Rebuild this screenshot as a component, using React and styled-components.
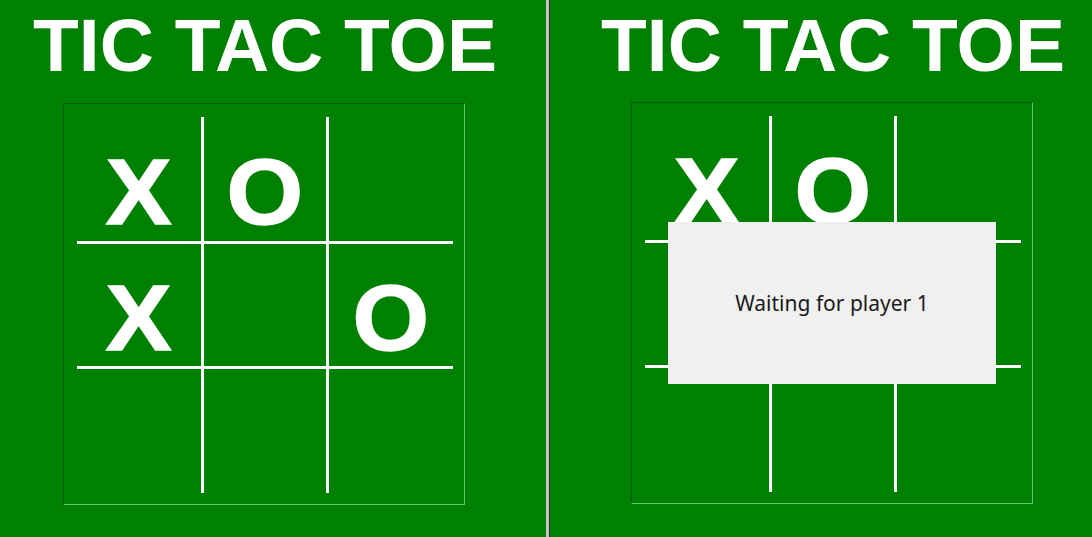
import styled, { createGlobalStyle } from "styled-components";

const GlobalStyle = createGlobalStyle`
  html, body {
    margin: 0;
    padding: 0;
    background: #008000;
  }
  * {
    box-sizing: border-box;
  }
`;

const Screen = styled.div`
  display: flex;
  width: 1092px;
  height: 537px;
  overflow: hidden;
  background-color: #008000;
`;

const Panel = styled.div`
  width: ${({ width }) => width}px;
  flex-shrink: 0;
  padding-left: ${({ offset }) => offset}px;
`;

const Divider = styled.div`
  width: 4px;
  flex-shrink: 0;
  background-color: #c6c6c6;
  border-right: 1px solid #1f2a1f;
`;

const Column = styled.div`
  width: 530px;
  display: flex;
  flex-direction: column;
  align-items: center;
`;

const Title = styled.h1`
  margin: 0;
  padding-top: 8px;
  font-family: "Liberation Sans", Arial, sans-serif;
  font-weight: 700;
  font-size: 75px;
  line-height: 75px;
  color: #ffffff;
  white-space: nowrap;
`;

const Board = styled.div`
  position: relative;
  margin-top: ${({ top }) => top}px;
  margin-right: ${({ shift }) => shift}px;
  width: 402px;
  height: 402px;
  padding: 13px;
  border: 1px solid;
  border-color: #005c00 #6fbf6f #6fbf6f #005c00;
`;

const Grid = styled.div`
  display: grid;
  grid-template-columns: 124px 128px 124px;
  grid-template-rows: 124px 128px 124px;
`;

const Cell = styled.div`
  display: flex;
  align-items: center;
  justify-content: center;
  padding-top: 25px;
  border-style: solid;
  border-color: #ffffff;
  border-width: ${({ row, col }) =>
    `${row === 1 ? 3 : 0}px ${col === 1 ? 3 : 0}px ${row === 1 ? 3 : 0}px ${col === 1 ? 3 : 0}px`};
`;

const Mark = styled.span`
  display: inline-block;
  font-family: "Liberation Sans", Arial, sans-serif;
  font-weight: 700;
  font-size: 92px;
  line-height: 1;
  color: #ffffff;
  -webkit-text-stroke: 1.5px #ffffff;
  transform: scaleX(1.07);
`;

const Modal = styled.div`
  position: absolute;
  left: 50%;
  top: 50%;
  width: 328px;
  height: 162px;
  transform: translate(-50%, -50%);
  background-color: #f0f0f0;
  display: flex;
  align-items: center;
  justify-content: center;
  font-family: "Segoe UI", "Noto Sans", sans-serif;
  font-size: 21px;
  color: #1a1a1a;
`;

const leftMoves = [
  ["X", "O", ""],
  ["X", "", "O"],
  ["", "", ""],
];

const rightMoves = [
  ["X", "O", ""],
  ["", "", ""],
  ["", "", ""],
];

const GameBoard = ({ moves, top, shift = 0, children }) => (
  <Board top={top} shift={shift}>
    <Grid>
      {moves.map((line, r) =>
        line.map((mark, c) => (
          <Cell key={`${r}-${c}`} row={r} col={c}>
            {mark && <Mark>{mark}</Mark>}
          </Cell>
        ))
      )}
    </Grid>
    {children}
  </Board>
);

const App = () => {
  return (
    <>
      <GlobalStyle />
      <Screen>
        <Panel width={546} offset={0}>
          <Column>
            <Title>TIC TAC TOE</Title>
            <GameBoard moves={leftMoves} top={20} shift={2} />
          </Column>
        </Panel>
        <Divider />
        <Panel width={542} offset={18}>
          <Column>
            <Title>TIC TAC TOE</Title>
            <GameBoard moves={rightMoves} top={19} shift={2}>
              <Modal>Waiting for player 1</Modal>
            </GameBoard>
          </Column>
        </Panel>
      </Screen>
    </>
  );
};

export default App;
